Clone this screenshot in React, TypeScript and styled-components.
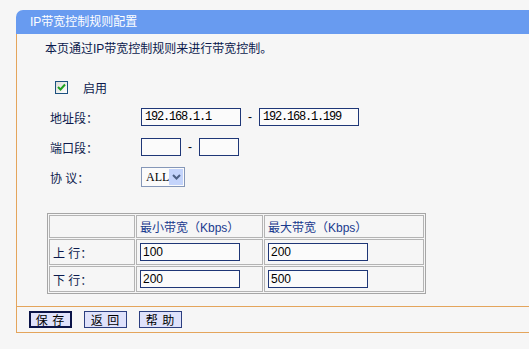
import styled, { createGlobalStyle } from 'styled-components'

const GlobalStyle = createGlobalStyle`
  html, body {
    margin: 0;
    padding: 0;
    background: #f6f6f6;
  }
  body {
    font-family: "Liberation Sans", "Noto Sans CJK SC", sans-serif;
    font-size: 12px;
    color: #0c1a4d;
  }
`

const Page = styled.div`
  box-sizing: border-box;
  height: 349px;
  padding: 10px 0 0 16px;
  background: #f6f6f6;
`

const Header = styled.div`
  height: 24px;
  line-height: 24px;
  padding-left: 14px;
  background: #689bf0;
  color: #ffffff;
  border-top-left-radius: 7px;
`

const Main = styled.div`
  border-left: 1px solid #e4a55c;
  overflow: hidden;
`

const Intro = styled.div`
  margin-top: 7px;
  padding-left: 28px;
  height: 16px;
  line-height: 16px;
`

const CheckRow = styled.div`
  margin-top: 15px;
  height: 30px;
  display: flex;
  align-items: center;
  padding-left: 38px;
`

const CheckBox = styled.span`
  box-sizing: border-box;
  width: 13px;
  height: 13px;
  border: 1px solid #1c5180;
  background: linear-gradient(135deg, #dcdcd7, #ffffff);
  display: inline-flex;
  align-items: center;
  justify-content: center;
  margin-right: 15px;
`

const FormRow = styled.div`
  height: 30px;
  display: grid;
  grid-template-columns: 91px auto;
  align-items: center;
  padding-left: 33px;
`

const Controls = styled.div`
  display: flex;
  align-items: center;
`

const Input = styled.div<{ $w: number; $mono?: boolean }>`
  box-sizing: border-box;
  width: ${p => p.$w}px;
  height: 18px;
  border: 1px solid #1f3777;
  background: #fbfbfb;
  padding-left: ${p => (p.$mono ? 3 : 2)}px;
  line-height: 16px;
  color: #000;
  font-family: ${p => (p.$mono ? '"Liberation Mono", monospace' : '"Liberation Sans", sans-serif')};
  font-size: ${p => (p.$mono ? '12px' : '12px')};
  letter-spacing: ${p => (p.$mono ? '-1.2px' : '0')};
  white-space: nowrap;
`

const Dash = styled.span`
  width: 18px;
  text-align: center;
  color: #000;
`

const Select = styled.div`
  box-sizing: border-box;
  width: 44px;
  height: 20px;
  border: 1px solid #8597b8;
  background: #fbfbfb;
  display: flex;
  align-items: center;
  justify-content: space-between;
  padding: 1px 1px 1px 4px;
  font-family: "Liberation Serif", serif;
  font-size: 12px;
  color: #000;
`

const SelectArrow = styled.span`
  width: 16px;
  height: 16px;
  background: #c4d4fb;
  display: flex;
  align-items: center;
  justify-content: center;
`

const Table = styled.table`
  margin: 21px 0 0 30px;
  width: 379px;
  border: 1px solid #a6a6a6;
  border-spacing: 1px;
`

const Cell = styled.td<{ $w?: number; $head?: boolean }>`
  border: 1px solid #b4b4b4;
  padding: 0 0 0 3px;
  height: ${p => (p.$head ? 21 : 24)}px;
  width: ${p => (p.$w ? `${p.$w}px` : 'auto')};
  color: ${p => (p.$head ? '#1a3a8e' : '#0c1a4d')};
  vertical-align: middle;
`

const Footer = styled.div`
  box-sizing: border-box;
  margin-top: 12px;
  height: 27px;
  border-top: 1px solid #e4a55c;
  border-bottom: 1px solid #e4a55c;
  display: flex;
  align-items: center;
  gap: 12px;
  padding-left: 12px;
`

const Button = styled.button<{ $active?: boolean }>`
  box-sizing: border-box;
  width: 43px;
  height: 17px;
  padding: 0;
  border: ${p => (p.$active ? '2px solid #0b1448' : '1px solid #2c3f80')};
  background: #dfe2fb;
  font-family: "Noto Sans CJK SC", sans-serif;
  font-size: 12px;
  line-height: 13px;
  letter-spacing: 1px;
  color: #000;
  white-space: pre;
`

const rows = [
  { label: '上 行：', min: '100', max: '200' },
  { label: '下 行：', min: '200', max: '500' },
]

export default function App() {
  return (
    <>
      <GlobalStyle />
      <Page>
        <Header>IP带宽控制规则配置</Header>
        <Main>
          <Intro>本页通过IP带宽控制规则来进行带宽控制。</Intro>
          <CheckRow>
            <CheckBox>
              <svg width="9" height="8" viewBox="0 0 9 8">
                <path d="M1 4 L3.5 6.5 L8 1.5" fill="none" stroke="#21a121" strokeWidth="2" />
              </svg>
            </CheckBox>
            启用
          </CheckRow>
          <FormRow>
            <span>地址段：</span>
            <Controls>
              <Input $w={100} $mono>192.168.1.1</Input>
              <Dash>-</Dash>
              <Input $w={100} $mono>192.168.1.199</Input>
            </Controls>
          </FormRow>
          <FormRow>
            <span>端口段：</span>
            <Controls>
              <Input $w={40} $mono />
              <Dash>-</Dash>
              <Input $w={40} $mono />
            </Controls>
          </FormRow>
          <FormRow>
            <span>协 议：</span>
            <Controls>
              <Select>
                ALL
                <SelectArrow>
                  <svg width="9" height="6" viewBox="0 0 9 6">
                    <path d="M1 1 L4.5 4.5 L8 1" fill="none" stroke="#4d6185" strokeWidth="2" />
                  </svg>
                </SelectArrow>
              </Select>
            </Controls>
          </FormRow>
          <Table>
            <tbody>
              <tr>
                <Cell $head $w={81} />
                <Cell $head $w={122}>最小带宽（Kbps）</Cell>
                <Cell $head>最大带宽（Kbps）</Cell>
              </tr>
              {rows.map(r => (
                <tr key={r.label}>
                  <Cell>{r.label}</Cell>
                  <Cell>
                    <Input $w={100}>{r.min}</Input>
                  </Cell>
                  <Cell>
                    <Input $w={100}>{r.max}</Input>
                  </Cell>
                </tr>
              ))}
            </tbody>
          </Table>
          <Footer>
            <Button $active>保 存</Button>
            <Button>返 回</Button>
            <Button>帮 助</Button>
          </Footer>
        </Main>
      </Page>
    </>
  )
}
